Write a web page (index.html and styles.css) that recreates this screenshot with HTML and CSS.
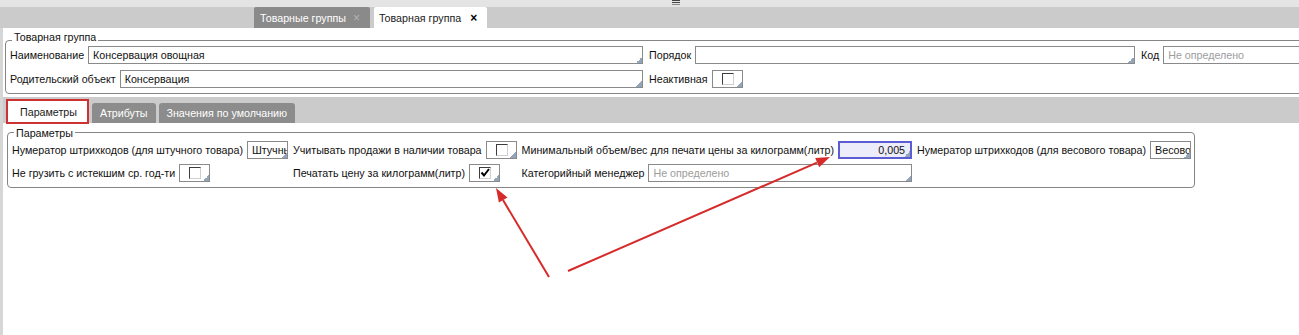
FILE: index.html
```html
<!DOCTYPE html>
<html lang="ru">
<head>
<meta charset="utf-8">
<title>Товарная группа</title>
<link rel="stylesheet" href="styles.css">
</head>
<body>
<div class="app">
  <div class="topstrip">
    <svg class="grip" width="8" height="5" viewBox="0 0 8 5"><rect x="0" y="0" width="8" height="1" fill="#444"/><rect x="0" y="2" width="8" height="1" fill="#444"/><rect x="0" y="4" width="8" height="1" fill="#888"/></svg>
  </div>
  <div class="tabbar">
    <div class="doc-tab">Товарные группы<span class="close">×</span></div>
    <div class="doc-tab active">Товарная группа<span class="close">×</span></div>
  </div>
  <div class="workspace">
    <div class="strip"></div>
    <div class="content">
      <div class="box group">
        <div class="box-title">Товарная группа</div>
        <div class="group-grid">
          <div class="cell"><span class="lbl">Наименование</span><div class="inp grow">Консервация овощная</div></div>
          <div class="cell"><span class="lbl">Порядок</span><div class="inp grow"></div></div>
          <div class="cell"><span class="lbl">Код</span><div class="inp grow placeholder nocorner">Не определено</div></div>
          <div class="cell"><span class="lbl">Родительский объект</span><div class="inp grow">Консервация</div></div>
          <div class="cell"><span class="lbl">Неактивная</span><div class="inp check"><span class="cb"></span></div></div>
        </div>
      </div>
      <div class="subtabs">
        <div class="sub-tab active">Параметры</div>
        <div class="sub-tab">Атрибуты</div>
        <div class="sub-tab">Значения по умолчанию</div>
      </div>
      <div class="box params">
        <div class="box-title">Параметры</div>
        <div class="params-grid">
          <div class="cell"><span class="lbl">Нумератор штрихкодов (для штучного товара)</span><div class="inp short">Штучный</div></div>
          <div class="cell"><span class="lbl">Учитывать продажи в наличии товара</span><div class="inp check"><span class="cb"></span></div></div>
          <div class="cell"><span class="lbl">Минимальный объем/вес для печати цены за килограмм(литр)</span><div class="inp num">0,005</div></div>
          <div class="cell"><span class="lbl">Нумератор штрихкодов (для весового товара)</span><div class="inp short">Весовой</div></div>
          <div class="cell"><span class="lbl">Не грузить с истекшим ср. год-ти</span><div class="inp check"><span class="cb"></span></div></div>
          <div class="cell"><span class="lbl">Печатать цену за килограмм(литр)</span><div class="inp check"><span class="cb checked"><svg width="10" height="10" viewBox="0 0 10 10"><polyline points="1.5,4.5 4,7.5 9,1" fill="none" stroke="#000" stroke-width="2"/></svg></span></div></div>
          <div class="cell"><span class="lbl">Категорийный менеджер</span><div class="inp grow placeholder">Не определено</div></div>
          <div class="cell"></div>
        </div>
      </div>
    </div>
  </div>
  <svg class="annot" width="1299" height="335" viewBox="0 0 1299 335">
    <line x1="549" y1="277" x2="503" y2="200" stroke="#d62b2b" stroke-width="2"/>
    <polygon points="496,188 507.5,197.4 498.9,202.6" fill="#d62b2b"/>
    <line x1="568" y1="271" x2="817" y2="162.6" stroke="#d62b2b" stroke-width="2"/>
    <polygon points="830,157 819.2,167.2 815.2,158" fill="#d62b2b"/>
  </svg>
</div>
</body>
</html>
```
FILE: styles.css
```css
body {
  margin: 0;
  font-family: "Liberation Sans", Arial, sans-serif;
  font-size: 10.7px;
  color: #111;
  background: #fff;
  overflow: hidden;
}

.app {
  width: 1450px;
  height: 335px;
  position: relative;
}

.topstrip {
  height: 7px;
  box-sizing: border-box;
  background: #e4e4e4;
  padding: 0 0 0 672px;
  display: flex;
  align-items: flex-start;
}

.grip {
  display: block;
}

.tabbar {
  height: 21px;
  background: #cbcbcb;
  display: flex;
  align-items: flex-end;
  gap: 4px;
  padding-left: 254px;
}

.doc-tab {
  height: 21px;
  display: flex;
  align-items: center;
  box-sizing: border-box;
  padding: 0 10px 0 6px;
  background: #8a8a8a;
  color: #fff;
  border-radius: 2px 2px 0 0;
  white-space: nowrap;
}

.doc-tab .close {
  margin-left: 7px;
  color: #b4b4b4;
  font-size: 12px;
}

.doc-tab.active {
  background: #fff;
  color: #1a1a1a;
  padding-left: 5px;
}

.doc-tab.active .close {
  margin-left: 9px;
  color: #000;
  font-weight: bold;
}

.workspace {
  display: flex;
  height: 307px;
}

.strip {
  width: 3px;
  background: #d6d6d6;
  flex: none;
}

.content {
  flex: 1;
}

.box {
  border: 1px solid #858585;
  border-radius: 4px;
  box-sizing: border-box;
}

.box-title {
  width: fit-content;
  margin-left: 2px;
  padding: 0 2px;
  line-height: 14px;
  background: #fff;
  color: #111;
}

.group {
  margin: 12px 0 0 2px;
  padding: 0 0 5px 4px;
}

.group .box-title {
  margin-top: -11px;
}

.group-grid {
  margin-top: 2px;
  display: grid;
  grid-template-columns: 633px 486px 1fr;
  column-gap: 6px;
  row-gap: 6px;
}

.cell {
  display: flex;
  align-items: center;
  gap: 4px;
  white-space: nowrap;
}

.lbl {
  line-height: 14px;
}

.inp {
  height: 18px;
  box-sizing: border-box;
  border: 1px solid #8a8a8a;
  background: #fff;
  position: relative;
  padding: 0 4px;
  display: flex;
  align-items: center;
  overflow: hidden;
  white-space: nowrap;
  color: #111;
}

.inp::after {
  content: "";
  position: absolute;
  right: 0;
  bottom: 0;
  width: 6px;
  height: 6px;
  background: linear-gradient(135deg, transparent 50%, #93a5bb 50%);
}

.inp.nocorner::after {
  display: none;
}

.grow {
  flex: 1;
  min-width: 0;
}

.placeholder {
  color: #9c9c9c;
}

.check {
  width: 31px;
  flex: none;
  padding: 0 0 0 9px;
}

.cb {
  width: 12px;
  height: 12px;
  box-sizing: border-box;
  border: 1px solid;
  border-color: #3c3c3c #cfcfcf #cfcfcf #3c3c3c;
  background: #fff;
  display: flex;
  align-items: center;
  justify-content: center;
}

.subtabs {
  margin-top: 3px;
  height: 26px;
  background: #cbcbcb;
  display: flex;
  align-items: flex-end;
  gap: 3px;
  padding-left: 3px;
}

.sub-tab {
  height: 20px;
  display: flex;
  align-items: center;
  padding: 0 8px;
  background: #8c8c8c;
  color: #fff;
  border-radius: 3px 3px 0 0;
  white-space: nowrap;
}

.sub-tab.active {
  height: 25px;
  box-sizing: border-box;
  margin-bottom: -1px;
  border: 2px solid #cc3232;
  border-radius: 0;
  background: #fff;
  color: #1a1a1a;
  padding: 0 10px 0 12px;
}

.params {
  width: fit-content;
  margin: 9px 0 0 4px;
  padding: 0 3px 5px 4px;
}

.params .box-title {
  margin-top: -7px;
}

.params-grid {
  margin-top: 1px;
  display: grid;
  grid-template-columns: repeat(4, auto);
  column-gap: 5px;
  row-gap: 5px;
}

.short {
  width: 41px;
  flex: none;
}

.num {
  width: 74px;
  flex: none;
  border: 2px solid #5c5cd4;
  background: #ececfb;
  justify-content: flex-end;
  padding-right: 5px;
}

.annot {
  position: absolute;
  left: 0;
  top: 0;
  pointer-events: none;
}
```
